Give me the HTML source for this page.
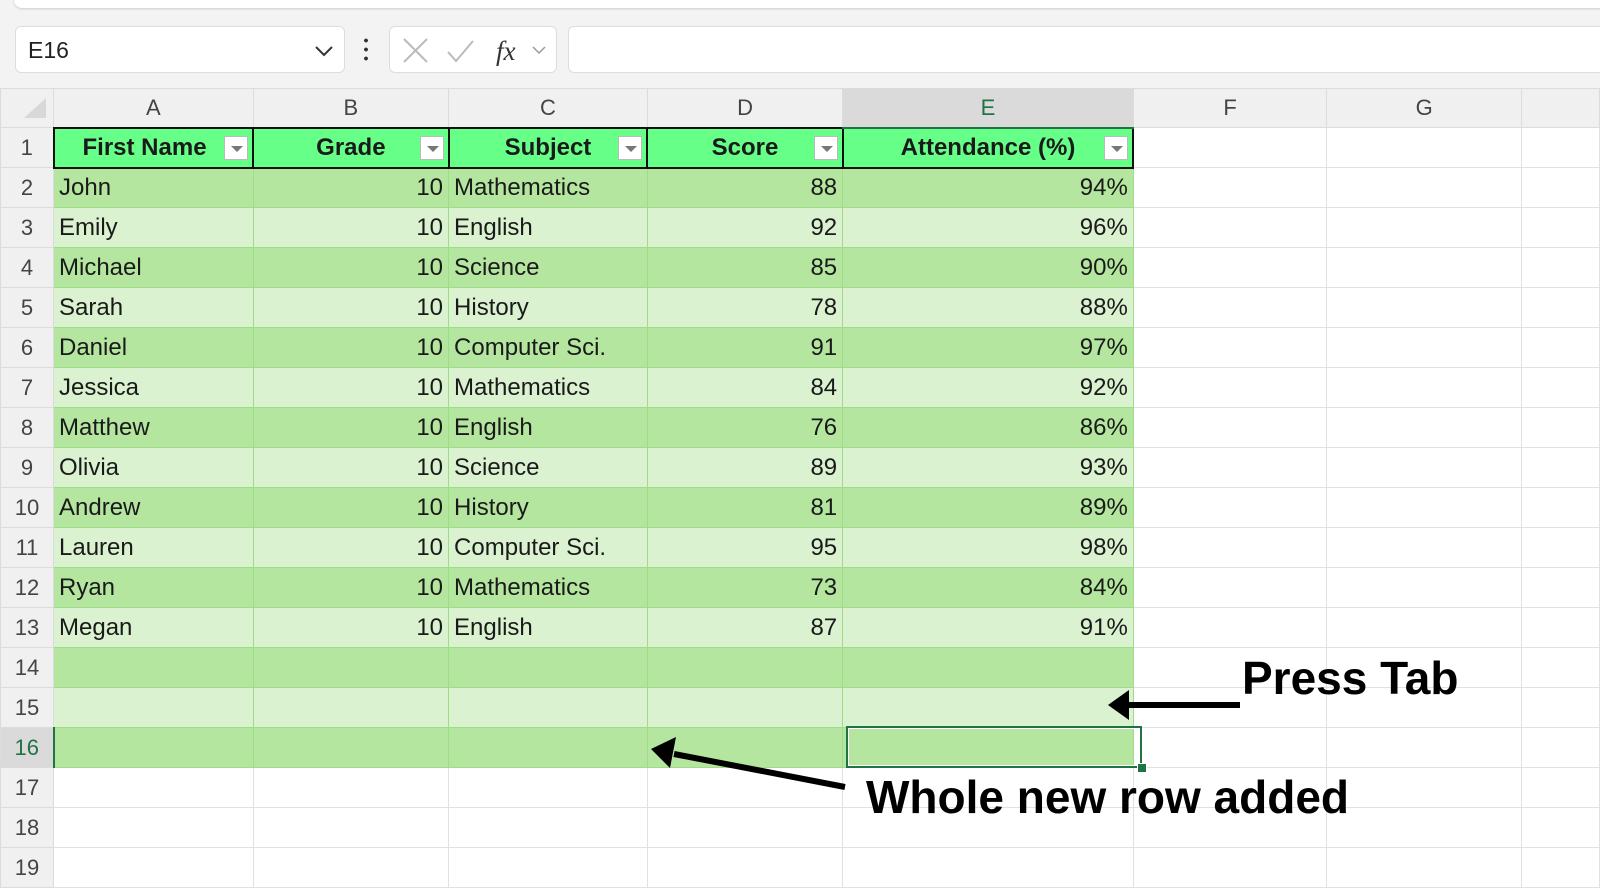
<!DOCTYPE html>
<html><head><style>
body{margin:0;width:1600px;height:856px;overflow:hidden;background:#f3f3f3;font-family:"Liberation Sans",sans-serif;position:relative}
.top{position:absolute;left:14px;top:-10px;width:1600px;height:18px;background:#fff;border-radius:8px;box-shadow:0 1px 2px #ccc}
.nb{position:absolute;left:15px;top:26px;width:330px;height:47px;background:#fff;border:1px solid #ddd;border-radius:6px;font-size:23px;line-height:47px;box-sizing:border-box;padding-left:12px;color:#222}
.fb{position:absolute;left:389px;top:26px;width:168px;height:47px;background:#fff;border:1px solid #ddd;border-radius:6px;box-sizing:border-box}
.inp{position:absolute;left:568px;top:26px;width:1060px;height:47px;background:#fff;border:1px solid #ddd;border-radius:6px;box-sizing:border-box}
table{position:absolute;left:0;top:88px;border-collapse:collapse;table-layout:fixed;background:#fff}
td{border:1px solid #e1e1e1;height:40px;padding:0 5px;font-size:24px;color:#1a1a1a;white-space:nowrap;overflow:hidden;box-sizing:border-box}
tr.h td{background:#f0f0f0;text-align:center;color:#444;font-size:22px;height:39px;border-color:#dcdcdc}
td.rh{background:#f0f0f0;text-align:center;color:#444;font-size:22px;padding:0;border-color:#dcdcdc}
tr.t1 td.c{background:#66ff88;font-weight:bold;text-align:center;border:2px solid #111;position:relative}
td.d{background:#b4e6a0;border-color:#9fdc88}
td.l{background:#daf2d0;border-color:#9fdc88}
.r{text-align:right}
.dd{position:absolute;right:4px;top:7px;width:24px;height:24px;background:#fff;border:1px solid #bbb;box-sizing:border-box}
.dd:after{content:"";position:absolute;left:6px;top:9px;border-left:6px solid transparent;border-right:6px solid transparent;border-top:6px solid #777}
.ann{position:absolute;font-weight:bold;font-size:46px;color:#000}
</style></head><body>
<div class="top"></div>
<div class="nb">E16<svg style="position:absolute;right:10px;top:18px" width="20" height="12"><path d="M2 2l8 8 8-8" stroke="#333" stroke-width="2" fill="none"/></svg></div>
<div style="position:absolute;left:364px;top:36px;width:4px;height:27px;background:radial-gradient(circle,#333 1.8px,transparent 2px) 0 0/4px 9px"></div>
<div class="fb"><svg width="168" height="47"><path d="M14 12l23 23M37 12L14 35" stroke="#bbb" stroke-width="2"/><path d="M58 25l8 9 17-20" stroke="#bbb" stroke-width="2" fill="none"/><text x="106" y="33" font-family="Liberation Serif" font-style="italic" font-size="27" fill="#333">fx</text><path d="M143 20l6 6 6-6" stroke="#999" stroke-width="1.5" fill="none"/></svg></div>
<div class="inp"></div>
<table>
<colgroup><col style="width:48px"><col style="width:201px"><col style="width:199px"><col style="width:200px"><col style="width:199px"><col style="width:294px"><col style="width:199px"><col style="width:200px"><col style="width:80px"></colgroup>
<tr class="h"><td style="background:#f0f0f0"><svg width="30" height="24" style="display:block;margin-left:12px"><path d="M28 2V22H6Z" fill="#d8d8d8"/></svg></td><td>A</td><td>B</td><td>C</td><td>D</td><td style="background:#dadada;border-bottom:2px solid #217346;color:#217346">E</td><td>F</td><td>G</td><td></td></tr>
<tr class="t1"><td class="rh">1</td><td class="c" style="text-align:left;padding-left:28px">First Name<span class="dd"></span></td><td class="c">Grade<span class="dd"></span></td><td class="c">Subject<span class="dd"></span></td><td class="c">Score<span class="dd"></span></td><td class="c">Attendance (%)<span class="dd"></span></td><td></td><td></td><td></td></tr>
<tr><td class="rh">2</td><td class="d">John</td><td class="d r">10</td><td class="d">Mathematics</td><td class="d r">88</td><td class="d r">94%</td><td></td><td></td><td></td></tr>
<tr><td class="rh">3</td><td class="l">Emily</td><td class="l r">10</td><td class="l">English</td><td class="l r">92</td><td class="l r">96%</td><td></td><td></td><td></td></tr>
<tr><td class="rh">4</td><td class="d">Michael</td><td class="d r">10</td><td class="d">Science</td><td class="d r">85</td><td class="d r">90%</td><td></td><td></td><td></td></tr>
<tr><td class="rh">5</td><td class="l">Sarah</td><td class="l r">10</td><td class="l">History</td><td class="l r">78</td><td class="l r">88%</td><td></td><td></td><td></td></tr>
<tr><td class="rh">6</td><td class="d">Daniel</td><td class="d r">10</td><td class="d">Computer Sci.</td><td class="d r">91</td><td class="d r">97%</td><td></td><td></td><td></td></tr>
<tr><td class="rh">7</td><td class="l">Jessica</td><td class="l r">10</td><td class="l">Mathematics</td><td class="l r">84</td><td class="l r">92%</td><td></td><td></td><td></td></tr>
<tr><td class="rh">8</td><td class="d">Matthew</td><td class="d r">10</td><td class="d">English</td><td class="d r">76</td><td class="d r">86%</td><td></td><td></td><td></td></tr>
<tr><td class="rh">9</td><td class="l">Olivia</td><td class="l r">10</td><td class="l">Science</td><td class="l r">89</td><td class="l r">93%</td><td></td><td></td><td></td></tr>
<tr><td class="rh">10</td><td class="d">Andrew</td><td class="d r">10</td><td class="d">History</td><td class="d r">81</td><td class="d r">89%</td><td></td><td></td><td></td></tr>
<tr><td class="rh">11</td><td class="l">Lauren</td><td class="l r">10</td><td class="l">Computer Sci.</td><td class="l r">95</td><td class="l r">98%</td><td></td><td></td><td></td></tr>
<tr><td class="rh">12</td><td class="d">Ryan</td><td class="d r">10</td><td class="d">Mathematics</td><td class="d r">73</td><td class="d r">84%</td><td></td><td></td><td></td></tr>
<tr><td class="rh">13</td><td class="l">Megan</td><td class="l r">10</td><td class="l">English</td><td class="l r">87</td><td class="l r">91%</td><td></td><td></td><td></td></tr>
<tr><td class="rh">14</td><td class="d"></td><td class="d"></td><td class="d"></td><td class="d"></td><td class="d"></td><td></td><td></td><td></td></tr>
<tr><td class="rh">15</td><td class="l"></td><td class="l"></td><td class="l"></td><td class="l"></td><td class="l"></td><td></td><td></td><td></td></tr>
<tr><td class="rh" style="background:#dadada;border-right:2px solid #217346;color:#217346">16</td><td class="d"></td><td class="d"></td><td class="d"></td><td class="d"></td><td class="d"></td><td></td><td></td><td></td></tr>
<tr><td class="rh">17</td><td></td><td></td><td></td><td></td><td></td><td></td><td></td><td></td></tr>
<tr><td class="rh">18</td><td></td><td></td><td></td><td></td><td></td><td></td><td></td><td></td></tr>
<tr><td class="rh">19</td><td></td><td></td><td></td><td></td><td></td><td></td><td></td><td></td></tr>
</table>
<div style="position:absolute;left:846px;top:726px;width:296px;height:42px;border:2px solid #217346;box-sizing:border-box;outline:1px solid #fff;outline-offset:-3px"></div>
<div style="position:absolute;left:1137px;top:763px;width:8px;height:8px;background:#217346;border:1px solid #fff"></div>
<svg style="position:absolute;left:0;top:0" width="1600" height="856">
<path d="M1240 705H1128" stroke="#000" stroke-width="6"/><path d="M1108 705l21-15v30z" fill="#000"/>
<path d="M845 787L674 754" stroke="#000" stroke-width="6"/><path d="M651 749l25-12-6 31z" fill="#000"/>
</svg>
<div class="ann" style="left:1242px;top:651px">Press Tab</div>
<div class="ann" style="left:866px;top:770px">Whole new row added</div>
</body></html>
